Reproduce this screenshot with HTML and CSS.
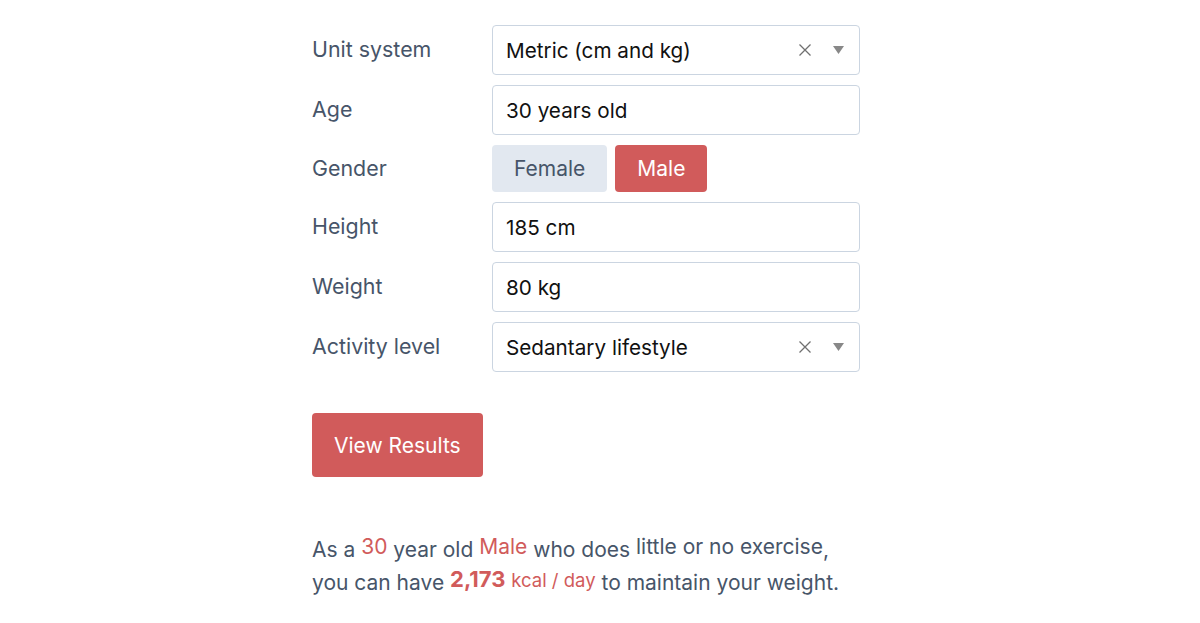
FILE: index.html
```html
<!DOCTYPE html>
<html lang="en">
<head>
<meta charset="utf-8">
<title>Calorie calculator</title>
<link rel="stylesheet" href="styles.css">
</head>
<body>
<main class="page">
  <form class="form">
    <div class="row">
      <label class="label">Unit system</label>
      <div class="select">
        <span class="value">Metric (cm and kg)</span>
        <span class="clear">
          <svg width="14" height="14" viewBox="0 0 14 14"><path d="M1.5 1.5 L12.5 12.5 M12.5 1.5 L1.5 12.5" stroke="#707070" stroke-width="1.3" fill="none"/></svg>
        </span>
        <span class="caret">
          <svg width="11" height="8" viewBox="0 0 11 8"><path d="M0 0 H11 L5.5 8 Z" fill="#888"/></svg>
        </span>
      </div>
    </div>
    <div class="row">
      <label class="label">Age</label>
      <div class="input">30 years old</div>
    </div>
    <div class="row">
      <label class="label">Gender</label>
      <div class="toggle">
        <button type="button" class="opt">Female</button>
        <button type="button" class="opt active">Male</button>
      </div>
    </div>
    <div class="row">
      <label class="label">Height</label>
      <div class="input">185 cm</div>
    </div>
    <div class="row">
      <label class="label">Weight</label>
      <div class="input">80 kg</div>
    </div>
    <div class="row">
      <label class="label">Activity level</label>
      <div class="select">
        <span class="value">Sedantary lifestyle</span>
        <span class="clear">
          <svg width="14" height="14" viewBox="0 0 14 14"><path d="M1.5 1.5 L12.5 12.5 M12.5 1.5 L1.5 12.5" stroke="#707070" stroke-width="1.3" fill="none"/></svg>
        </span>
        <span class="caret">
          <svg width="11" height="8" viewBox="0 0 11 8"><path d="M0 0 H11 L5.5 8 Z" fill="#888"/></svg>
        </span>
      </div>
    </div>
    <button type="button" class="submit">View Results</button>
  </form>
  <p class="result">As a <span class="hl">30</span> year old <span class="hl">Male</span> who does <span class="up">little or no exercise</span>, you can have <span class="num">2,173</span> <span class="unit">kcal / day</span> to maintain your weight.</p>
</main>
</body>
</html>
```

FILE: styles.css
```css
* { box-sizing: border-box; }
body {
  margin: 0;
  background: #fff;
  font-family: Inter, "Noto Sans", sans-serif;
  color: #475569;
}
.page {
  width: 576px;
  margin: 0 auto;
  padding-top: 25px;
}
.form {
  display: flex;
  flex-direction: column;
  gap: 10px;
}
.row {
  display: grid;
  grid-template-columns: 180px 368px;
  align-items: center;
}
.label {
  font-size: 21.4px;
  color: #475569;
  padding-bottom: 2px;
}
.input, .select {
  height: 50px;
  border: 1px solid #cbd5e1;
  border-radius: 4px;
  display: flex;
  align-items: center;
  padding: 0 13px;
  font-size: 20.7px;
  color: #111;
}
.select .value { flex: 1; }
.clear { display: flex; margin-right: 21px; }
.caret { display: flex; margin-right: 2px; }
.toggle {
  display: flex;
  gap: 8px;
  height: 47px;
}
.opt {
  border: none;
  border-radius: 4px;
  font-family: inherit;
  font-size: 21px;
  padding: 0 22px;
  background: #e2e8f0;
  color: #475569;
}
.opt.active {
  background: #d15b5b;
  color: #fff;
}
.submit {
  align-self: flex-start;
  margin-top: 31px;
  height: 64px;
  padding: 0 22px;
  border: none;
  border-radius: 4px;
  background: #d15b5b;
  color: #fff;
  font-family: inherit;
  font-size: 21px;
}
.result {
  margin: 56px 0 0;
  width: 548px;
  font-size: 21px;
  line-height: 33px;
  color: #475569;
}
.hl, .up, .num, .unit { position: relative; top: -3px; }
.hl { color: #d15b5b; }
.num { color: #d15b5b; font-weight: 700; font-size: 22px; }
.unit { color: #d15b5b; font-size: 18.5px; }
```
